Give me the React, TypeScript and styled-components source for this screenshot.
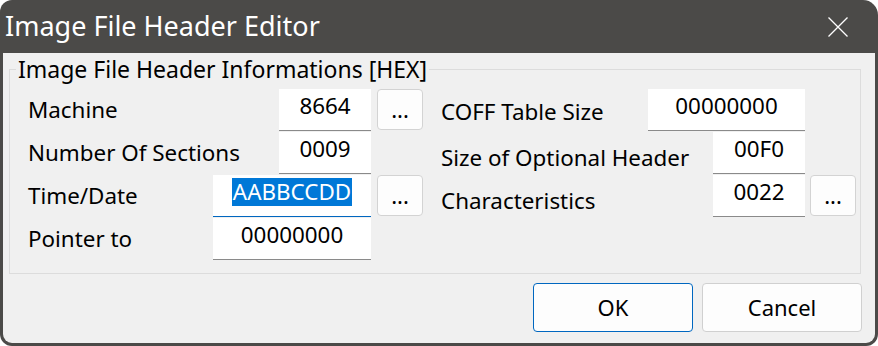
import React from 'react';
import styled, { createGlobalStyle } from 'styled-components';

const Global = createGlobalStyle`
  html, body { margin: 0; padding: 0; background: #ffffff; }
  body {
    width: 878px; height: 346px; overflow: hidden;
    font-family: "Noto Sans", "Open Sans", sans-serif;
    color: #000;
  }
`;

const Window = styled.div`
  width: 878px;
  height: 346px;
  box-sizing: border-box;
  background: #4b4a48;
  border-radius: 12px 15px 12px 12px;
  padding: 0 3px 3px 3px;
  display: flex;
  flex-direction: column;
  overflow: hidden;
`;

const TitleBar = styled.div`
  height: 53px;
  flex: none;
  display: flex;
  align-items: center;
  justify-content: space-between;
  padding: 0 27px 0 2px;
  color: #ffffff;
`;

const Title = styled.div`
  font-size: 27px;
  line-height: 1;
  padding-bottom: 3px;
`;

const CloseIcon = styled.svg`
  width: 20px;
  height: 20px;
  display: block;
  margin-top: 1px;
`;

const Body = styled.div`
  flex: 1;
  background: #f0f0f0;
  border-radius: 0 0 9px 9px;
  padding: 1px 14px 11px 6px;
  display: flex;
  flex-direction: column;
`;

const Group = styled.fieldset`
  margin: 0;
  padding: 0 0 13px 0;
  border: 1px solid #dcdcdc;
  min-width: 0;
`;

const Legend = styled.legend`
  margin-left: 6px;
  padding: 0 2px;
  font-size: 23px;
  line-height: 30px;
`;

const Columns = styled.div`
  display: grid;
  grid-template-columns: 395px 415px;
  column-gap: 18px;
  padding: 4px 0 0 18px;
`;

const Column = styled.div`
  display: flex;
  flex-direction: column;
`;

const Row = styled.div`
  display: flex;
  align-items: center;
  height: 43px;
`;

const Label = styled.div<{ $shift?: number }>`
  flex: 1;
  font-size: 22.4px;
  white-space: nowrap;
  padding-top: ${p => p.$shift ?? 0}px;
`;

const Field = styled.div<{ $width: number; $focused?: boolean }>`
  width: ${p => p.$width}px;
  height: 42px;
  box-sizing: border-box;
  background: #ffffff;
  border-bottom: 1px solid ${p => (p.$focused ? '#0067c0' : '#8a8a8a')};
  display: flex;
  align-items: center;
  justify-content: center;
  padding-bottom: 7px;
  font-size: 22.4px;
`;

const Selected = styled.span`
  background: #0078d7;
  color: #ffffff;
  padding: 0 1px;
  line-height: 28px;
`;

const DotsButton = styled.button<{ $gap: number }>`
  width: 46px;
  height: 41px;
  margin-left: ${p => p.$gap}px;
  box-sizing: border-box;
  border: 1px solid #d3d3d3;
  border-radius: 4px;
  background: #fdfdfd;
  font-family: inherit;
  font-size: 22px;
  color: #000;
  padding: 0 0 2px 0;
`;

const Spacer = styled.div<{ $gap: number }>`
  width: 46px;
  margin-left: ${p => p.$gap}px;
`;

const Footer = styled.div`
  display: flex;
  justify-content: flex-end;
  gap: 9px;
  margin-top: 9px;
  margin-right: -1px;
`;

const DialogButton = styled.button<{ $primary?: boolean }>`
  width: 160px;
  height: 49px;
  box-sizing: border-box;
  border: 1px solid ${p => (p.$primary ? '#0067c0' : '#d0d0d0')};
  border-radius: 4px;
  background: #fdfdfd;
  font-family: inherit;
  font-size: 22px;
  color: #000;
  padding: 0 0 2px 0;
`;

type Item = {
  label: string;
  value: string;
  width: number;
  dots?: boolean;
  focused?: boolean;
  shift?: number;
};

const left: Item[] = [
  { label: 'Machine', value: '8664', width: 92, dots: true },
  { label: 'Number Of Sections', value: '0009', width: 92 },
  { label: 'Time/Date', value: 'AABBCCDD', width: 158, dots: true, focused: true },
  { label: 'Pointer to', value: '00000000', width: 158 },
];

const right: Item[] = [
  { label: 'COFF Table Size', value: '00000000', width: 157, shift: 4 },
  { label: 'Size of Optional Header', value: '00F0', width: 92, shift: 9 },
  { label: 'Characteristics', value: '0022', width: 92, dots: true, shift: 10 },
];

function FieldRow({ item, gap }: { item: Item; gap: number }) {
  return (
    <Row>
      <Label $shift={item.shift}>{item.label}</Label>
      <Field $width={item.width} $focused={item.focused}>
        {item.focused ? <Selected>{item.value}</Selected> : item.value}
      </Field>
      {item.dots ? <DotsButton $gap={gap}>...</DotsButton> : <Spacer $gap={gap} />}
    </Row>
  );
}

export default function App() {
  return (
    <>
      <Global />
      <Window>
        <TitleBar>
          <Title>Image File Header Editor</Title>
          <CloseIcon viewBox="0 0 20 20">
            <path d="M0.5 0.5 L19.5 19.5 M19.5 0.5 L0.5 19.5" stroke="#ffffff" strokeWidth="1.3" fill="none" />
          </CloseIcon>
        </TitleBar>
        <Body>
          <Group>
            <Legend>Image File Header Informations [HEX]</Legend>
            <Columns>
              <Column>
                {left.map(it => (
                  <FieldRow key={it.label} item={it} gap={6} />
                ))}
              </Column>
              <Column>
                {right.map(it => (
                  <FieldRow key={it.label} item={it} gap={5} />
                ))}
              </Column>
            </Columns>
          </Group>
          <Footer>
            <DialogButton $primary>OK</DialogButton>
            <DialogButton>Cancel</DialogButton>
          </Footer>
        </Body>
      </Window>
    </>
  );
}
